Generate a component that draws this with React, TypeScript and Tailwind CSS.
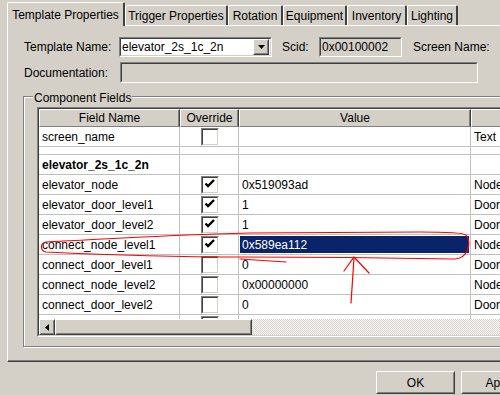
import React from 'react'

type Row = {
  name?: string
  check?: boolean | null
  value?: string
  kind?: string
  bold?: boolean
  thin?: boolean
  selected?: boolean
}

const TABS = [
  { label: 'Template Properties', w: 'w-[118px]', active: true },
  { label: 'Trigger Properties', w: 'w-[103px]' },
  { label: 'Rotation', w: 'w-[55px]' },
  { label: 'Equipment', w: 'w-[64px]' },
  { label: 'Inventory', w: 'w-[60px]' },
  { label: 'Lighting', w: 'w-[51px]' },
]

const ROWS: Row[] = [
  { name: 'screen_name', check: false, value: '', kind: 'Text' },
  { thin: true },
  { name: 'elevator_2s_1c_2n', bold: true },
  { name: 'elevator_node', check: true, value: '0x519093ad', kind: 'Node' },
  { name: 'elevator_door_level1', check: true, value: '1', kind: 'Door' },
  { name: 'elevator_door_level2', check: true, value: '1', kind: 'Door' },
  { name: 'connect_node_level1', check: true, value: '0x589ea112', kind: 'Node', selected: true },
  { name: 'connect_door_level1', check: false, value: '0', kind: 'Door' },
  { name: 'connect_node_level2', check: false, value: '0x00000000', kind: 'Node' },
  { name: 'connect_door_level2', check: false, value: '0', kind: 'Door' },
  { name: '', check: false, value: '', kind: '' },
]

// two-line sunken frame, classic win32 look
function Sunken({ className, inner, children }: { className: string; inner: string; children?: React.ReactNode }) {
  return (
    <div className={`shrink-0 border border-t-[#808080] border-l-[#808080] border-b-white border-r-white ${className}`}>
      <div className={`h-full border border-t-[#404040] border-l-[#404040] border-b-[#d4d0c8] border-r-[#d4d0c8] ${inner}`}>
        {children}
      </div>
    </div>
  )
}

function Raised({ className, children }: { className: string; children?: React.ReactNode }) {
  return (
    <div className={`shrink-0 border border-t-white border-l-white border-b-[#404040] border-r-[#404040] ${className}`}>
      <div className="h-full border border-t-[#d4d0c8] border-l-[#d4d0c8] border-b-[#808080] border-r-[#808080] flex items-center justify-center">
        {children}
      </div>
    </div>
  )
}

function CheckBox({ on }: { on: boolean }) {
  return (
    <div className="w-[18px] h-[18px] border border-t-[#808080] border-l-[#808080] border-b-white border-r-white">
      <div className="h-full border border-t-[#404040] border-l-[#404040] border-b-[#d4d0c8] border-r-[#d4d0c8] bg-white">
        {on && (
          <svg width="12" height="10" viewBox="0 0 12 10" className="ml-[1px] mt-[1px]">
            <path d="M1.5 4.5 L4 7 L10 1" stroke="#000" strokeWidth="2.4" fill="none" />
          </svg>
        )}
      </div>
    </div>
  )
}

function HeaderCell({ w, label }: { w: string; label: string }) {
  return (
    <div className={`${w} shrink-0 h-full border border-t-white border-l-white border-b-[#808080] border-r-[#404040] shadow-[inset_-1px_0_0_#808080] flex items-center justify-center`}>
      {label}
    </div>
  )
}

function GridRow({ row }: { row: Row }) {
  const cell = 'shrink-0 h-full border-r border-b border-[#c0c0c0] flex items-center'
  if (row.thin) {
    return (
      <div className="flex h-[8px]">
        <div className={`${cell} w-[141px]`} />
        <div className={`${cell} w-[59px]`} />
        <div className={`${cell} w-[232px]`} />
        <div className={`${cell} w-[100px]`} />
      </div>
    )
  }
  return (
    <div className="flex h-[20px]">
      <div className={`${cell} w-[141px] pl-[3px] ${row.bold ? 'font-bold' : ''}`}>{row.name}</div>
      <div className={`${cell} w-[59px] justify-center pl-[1px]`}>
        {row.check !== undefined && row.check !== null && <CheckBox on={row.check} />}
      </div>
      <div className={`${cell} w-[232px] ${row.selected ? 'p-[1px]' : 'pl-[3px]'}`}>
        {row.selected ? (
          <div className="w-full h-full bg-[#0a246a] text-white pl-[2px] flex items-center">{row.value}</div>
        ) : (
          row.value
        )}
      </div>
      <div className={`${cell} w-[100px] pl-[3px]`}>{row.kind}</div>
    </div>
  )
}

export default function App() {
  return (
    <div className="relative w-[500px] h-[395px] overflow-hidden bg-[#d4d0c8] text-[12px] text-black font-['Liberation_Sans',Arial,sans-serif]">
      {/* tabs */}
      <div className="flex items-end h-[25px] pl-[7px]">
        {TABS.map(t =>
          t.active ? (
            <div
              key={t.label}
              className={`${t.w} shrink-0 relative z-10 h-[24px] -mb-px bg-[#d4d0c8] border-t border-l border-white border-r-2 border-r-[#404040] rounded-t-[2px] flex items-start pt-[3px] justify-center`}
            >
              {t.label}
            </div>
          ) : (
            <div
              key={t.label}
              className={`${t.w} shrink-0 h-[20px] border-t border-l border-white border-r-2 border-r-[#404040] rounded-t-[2px] flex items-center justify-center`}
            >
              {t.label}
            </div>
          )
        )}
      </div>

      {/* tab page */}
      <div className="ml-[7px] w-[600px] h-[337px] border-t border-l border-white border-b border-b-[#404040] shadow-[inset_0_-1px_0_#808080]">
        <div className="flex items-center h-[20px] mt-[11px] pl-[16px]">
          <div className="w-[95px] shrink-0">Template Name:</div>
          <Sunken className="w-[153px] h-[20px]" inner="bg-white flex items-center pl-[1px] pr-[1px]">
            <span className="flex-1">elevator_2s_1c_2n</span>
            <Raised className="w-[16px] h-[16px] bg-[#d4d0c8]">
              <svg width="7" height="4" viewBox="0 0 7 4">
                <path d="M0 0 H7 L3.5 4 Z" fill="#000" />
              </svg>
            </Raised>
          </Sunken>
          <div className="ml-[10px] w-[37px] shrink-0">Scid:</div>
          <Sunken className="w-[83px] h-[20px]" inner="flex items-center pl-[1px]">
            0x00100002
          </Sunken>
          <div className="ml-[11px] shrink-0">Screen Name:</div>
        </div>

        <div className="flex items-center h-[21px] mt-[5px] pl-[16px]">
          <div className="w-[96px] shrink-0">Documentation:</div>
          <Sunken className="w-[358px] h-[21px]" inner="" />
        </div>

        {/* Component Fields group */}
        <div className="relative ml-[15px] mt-[13px] w-[560px] h-[251px] border border-[#808080] shadow-[inset_1px_1px_0_#fff,1px_1px_0_#fff] pl-[13px] pt-[10px]">
          <div className="absolute -top-[8px] left-[9px] px-[1px] bg-[#d4d0c8]">Component Fields</div>

          <Sunken className="w-[540px] h-[230px]" inner="flex flex-col bg-white overflow-hidden">
            <div className="flex h-[18px] shrink-0 bg-[#d4d0c8]">
              <HeaderCell w="w-[141px]" label="Field Name" />
              <HeaderCell w="w-[59px]" label="Override" />
              <HeaderCell w="w-[232px]" label="Value" />
              <HeaderCell w="w-[100px]" label="" />
            </div>
            <div className="flex-1 overflow-hidden">
              {ROWS.map((r, i) => (
                <GridRow key={i} row={r} />
              ))}
            </div>
            <div className="flex h-[16px] shrink-0">
              <Raised className="w-[16px] h-[16px] bg-[#d4d0c8]">
                <svg width="4" height="7" viewBox="0 0 4 7">
                  <path d="M4 0 V7 L0 3.5 Z" fill="#000" />
                </svg>
              </Raised>
              <Raised className="w-[197px] h-[16px] bg-[#d4d0c8]" />
              <div className="flex-1 bg-[repeating-conic-gradient(#d4d0c8_0_25%,#ffffff_0_50%)] bg-[length:2px_2px]" />
            </div>
          </Sunken>
        </div>
      </div>

      {/* buttons */}
      <div className="flex gap-[6px] mt-[9px] ml-[376px] w-[200px]">
        <Raised className="w-[79px] h-[23px] bg-[#d4d0c8]">OK</Raised>
        <Raised className="w-[79px] h-[23px] bg-[#d4d0c8]">Apply</Raised>
      </div>

      {/* red hand-drawn annotation over the screenshot */}
      <svg className="absolute inset-0 pointer-events-none" width="500" height="395" viewBox="0 0 500 395">
        <g stroke="#ff0000" strokeWidth="1.2" fill="none" strokeLinecap="round">
          <path d="M250 233 C 200 234, 120 238, 46 242 C 40 243, 40 251, 46 252 C 110 255, 170 257, 240 257 C 320 257, 400 258, 455 259 C 468 258, 472 243, 466 235 C 462 232, 440 232, 420 232 L 250 233" />
          <path d="M240 259 L 286 262" />
          <path d="M351 303 L 354 258" />
          <path d="M344 271 L 354 257 L 369 273" />
        </g>
      </svg>
    </div>
  )
}
